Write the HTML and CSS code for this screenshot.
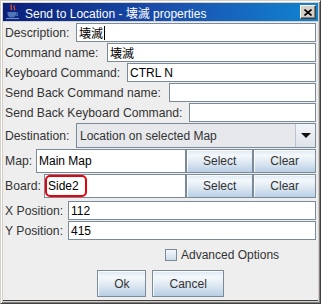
FILE: index.html
```html
<!DOCTYPE html>
<html>
<head>
<meta charset="utf-8">
<link rel="stylesheet" href="styles.css">
</head>
<body>
<div class="window">
  <div class="titlebar">
    <svg class="appicon" width="16" height="16" viewBox="0 0 16 16">
      <path d="M6.5 0.5c-2 2 1.5 3 -0.5 5.5M9.5 1.5c-1.8 1.8 1.5 2.6 -0.3 4.6" stroke="#e0502a" fill="none" stroke-width="1.3"/>
      <path d="M2.5 8h8.5v2.2c0 2-2 3.3-4.25 3.3S2.5 12.2 2.5 10.2z" fill="#4f74b8"/>
      <path d="M11 8.8c2.2 0 2.2 2.8 0 2.8" stroke="#4f74b8" fill="none" stroke-width="1.2"/>
      <path d="M1 14.5h13" stroke="#6b8fd0" stroke-width="1.2"/>
    </svg>
    <span class="title">Send to Location - 壊滅 properties</span>
    <span class="close">
      <svg width="8" height="7" viewBox="0 0 8 7"><path d="M0.5 0.5L7.5 6.5M7.5 0.5L0.5 6.5" stroke="#000" stroke-width="1.6"/></svg>
    </span>
  </div>
  <div class="content">
    <div class="row small"><span class="label w-desc">Description:</span><div class="field cjk">壊滅<span class="caret"></span></div></div>
    <div class="row small"><span class="label w-cmd">Command name:</span><div class="field cjk">壊滅</div></div>
    <div class="row small"><span class="label w-key">Keyboard Command:</span><div class="field">CTRL N</div></div>
    <div class="row small"><span class="label w-sbc">Send Back Command name:</span><div class="field"></div></div>
    <div class="row small"><span class="label w-sbk">Send Back Keyboard Command:</span><div class="field"></div></div>
    <div class="row combo-row"><span class="label w-desc">Destination:</span>
      <div class="combo"><span class="combo-text">Location on selected Map</span><span class="combo-arrow"><span class="tri"></span></span></div>
    </div>
    <div class="row big"><span class="label w-map">Map:</span><div class="field">Main Map</div><button class="btn">Select</button><button class="btn">Clear</button></div>
    <div class="row big"><span class="label w-board">Board:</span><div class="field hl-field">Side2<span class="hl"></span></div><button class="btn">Select</button><button class="btn">Clear</button></div>
    <div class="row small pos first"><span class="label w-pos">X Position:</span><div class="field">112</div></div>
    <div class="row small pos"><span class="label w-pos">Y Position:</span><div class="field">415</div></div>
    <div class="check-row"><span class="checkbox"></span><span class="check-label">Advanced Options</span></div>
    <div class="actions"><button class="btn action">Ok</button><button class="btn action">Cancel</button></div>
  </div>
</div>
</body>
</html>
```
FILE: styles.css
```css
html, body {
  margin: 0;
  padding: 0;
  background: #d4d0c8;
}
.window {
  width: 321px;
  height: 304px;
  box-sizing: border-box;
  background: #d4d0c8;
  border: 1px solid;
  border-color: #d4d0c8 #404040 #404040 #d4d0c8;
  box-shadow: inset 1px 1px #ffffff, inset -1px -1px #808080;
  padding: 2px;
  display: flex;
  flex-direction: column;
  font-family: "Liberation Sans", Arial, sans-serif;
  font-size: 12px;
  overflow: hidden;
}
.titlebar {
  height: 18px;
  flex: none;
  display: flex;
  align-items: center;
  background: linear-gradient(to right, #0a1f7a 0%, #1a52b0 55%, #1084d0 100%);
  color: #fff;
  padding-left: 2px;
  padding-right: 2px;
}
.appicon { flex: none; margin-right: 4px; }
.title {
  flex: 1;
  font-family: "Liberation Sans", "Noto Sans CJK JP", sans-serif;
  font-size: 12px;
  white-space: nowrap;
}
.close {
  width: 16px;
  height: 14px;
  box-sizing: border-box;
  background: #d4d0c8;
  border: 1px solid;
  border-color: #ffffff #404040 #404040 #ffffff;
  box-shadow: inset -1px -1px #808080;
  display: flex;
  align-items: center;
  justify-content: center;
}
.content {
  flex: 1;
  margin-top: 1px;
  background: #eeeeee;
  padding: 1px 2px 0 2px;
  display: flex;
  flex-direction: column;
  border-bottom: 1px solid #404040;
}
.row {
  display: flex;
  align-items: stretch;
  color: #333333;
}
.label {
  display: flex;
  align-items: center;
  white-space: nowrap;
  flex: none;
  font-size: 12.2px;
}
.w-desc { width: 71px; }
.w-cmd { width: 102px; }
.w-key { width: 122px; }
.w-sbc { width: 164px; }
.w-sbk { width: 184px; }
.w-map { width: 31px; }
.w-board { width: 39px; }
.w-pos { width: 63px; }
.small { height: 19px; margin-bottom: 1px; }
.combo-row { height: 25px; }
.big { height: 24px; margin-top: 1px; }
.pos.first { margin-top: 3px; }
.field {
  flex: 1;
  min-width: 0;
  box-sizing: border-box;
  background: #fff;
  border: 1px solid #7a8a99;
  color: #000;
  padding-left: 2px;
  display: flex;
  align-items: center;
  position: relative;
  white-space: nowrap;
}
.cjk { font-family: "Noto Sans CJK JP", sans-serif; font-size: 12px; }
.caret {
  display: inline-block;
  width: 1px;
  height: 14px;
  background: #000;
  margin-left: 1px;
}
.hl-field { padding-left: 3px; }
.hl {
  position: absolute;
  left: 0px;
  top: 0px;
  width: 42px;
  height: 22px;
  box-sizing: border-box;
  border: 2px solid #e8000b;
  border-radius: 5px;
}
.combo {
  flex: 1;
  display: flex;
  box-sizing: border-box;
  border: 1px solid #7a8a99;
  background: #e6e8eb;
  color: #333;
}
.combo-text {
  flex: 1;
  display: flex;
  align-items: center;
  padding-left: 3px;
}
.combo-arrow {
  width: 19px;
  border-left: 1px solid #b8c4d0;
  background: linear-gradient(#f2f5f8, #dde3ea);
  display: flex;
  align-items: center;
  justify-content: center;
}
.tri {
  width: 0;
  height: 0;
  border-left: 5px solid transparent;
  border-right: 5px solid transparent;
  border-top: 5px solid #111;
}
.btn {
  font-family: "Liberation Sans", Arial, sans-serif;
  font-size: 12px;
  color: #333;
  border: 1px solid #7a8a99;
  background: linear-gradient(#dde8f3 0%, #f4f8fb 25%, #dbe6f1 60%, #b8cfe5 100%);
  box-shadow: inset 1px 1px rgba(255,255,255,0.8);
  padding: 0 16px;
  margin: 0;
  flex: none;
}
.check-row {
  height: 20px;
  margin-top: 4px;
  display: flex;
  align-items: center;
  padding-left: 160px;
  color: #333;
}
.checkbox {
  width: 12px;
  height: 12px;
  box-sizing: border-box;
  border: 1px solid #7a8a99;
  background: linear-gradient(#f4f7fa, #cdddec);
  margin-right: 4px;
}
.actions {
  display: flex;
  justify-content: center;
  gap: 6px;
  margin-top: 5px;
}
.action { height: 27px; padding: 0 16px; }
```
